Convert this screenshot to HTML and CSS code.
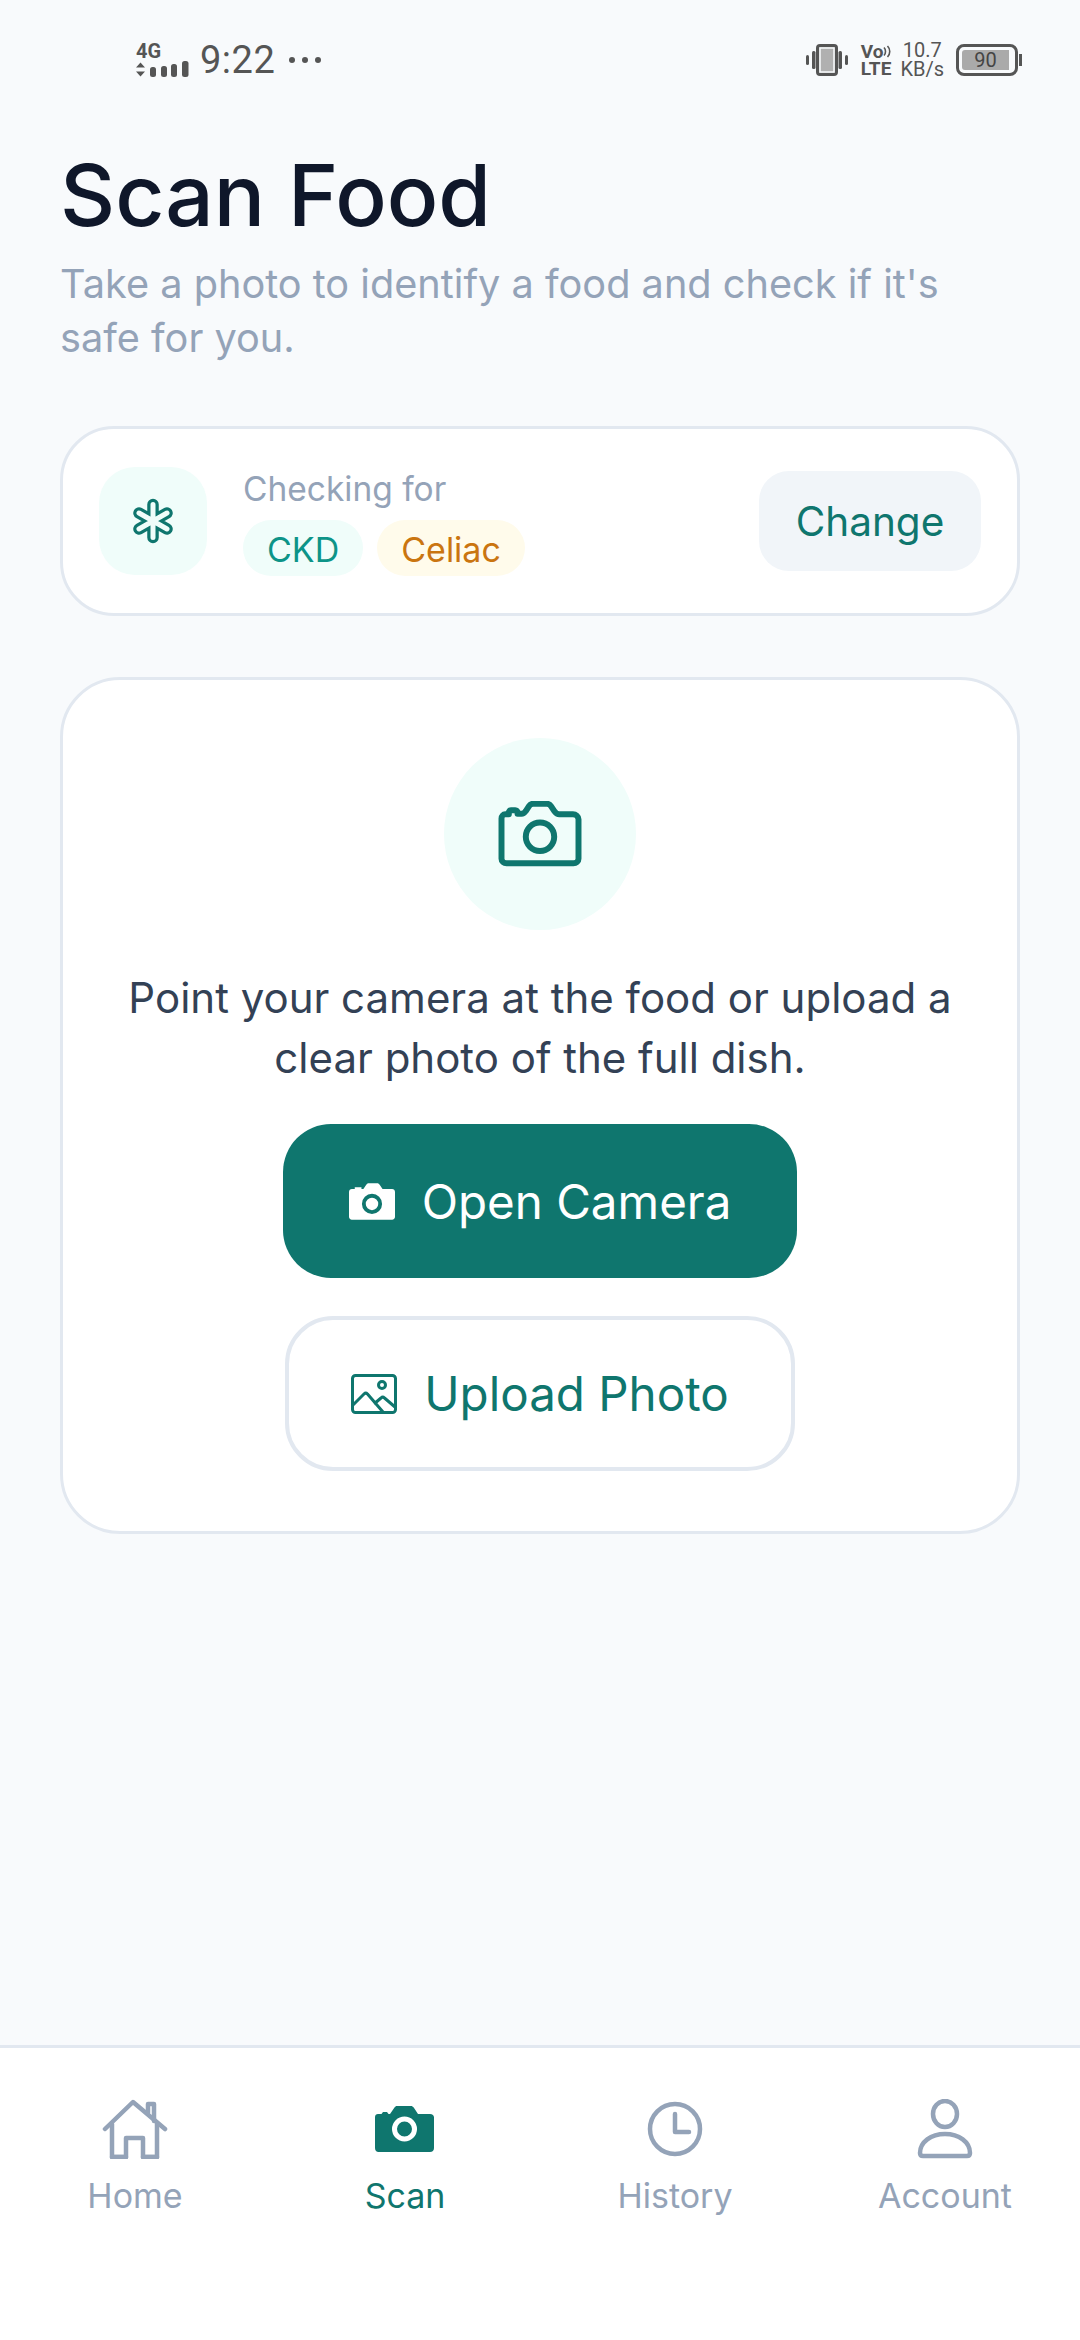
FILE: index.html
```html
<!DOCTYPE html>
<html>
<head>
  <title>Scan Food</title>
  <link rel="stylesheet" href="styles.css">
</head>
<body>
  <div class="screen">
    <div class="status-bar">
      <div class="status-left">
        <div class="net">
          <span class="net-label">4G</span>
          <svg class="net-bars" width="54" height="17" viewBox="0 0 54 17">
            <path d="M0 6.500L4.500 1.500L9 6.500ZM0 10.500L9 10.500L4.500 15.500Z" fill="#555"/>
            <rect x="14" y="6" width="6" height="10" rx="2.500" fill="#555"/>
            <rect x="25" y="5" width="6" height="11" rx="2.500" fill="#555"/>
            <rect x="35" y="3" width="6" height="13" rx="2.500" fill="#555"/>
            <rect x="46" y="0" width="6.500" height="16" rx="2.500" fill="#555"/>
          </svg>
        </div>
        <span class="clock">9:22</span>
        <span class="dots"><i></i><i></i><i></i></span>
      </div>
      <div class="status-right">
        <svg width="42" height="32" viewBox="0 0 42 32">
          <rect x="0" y="11" width="3" height="10" rx="1.500" fill="#555"/>
          <rect x="6" y="7" width="3.500" height="18" rx="1.500" fill="#555"/>
          <rect x="11.500" y="1.500" width="19" height="29" rx="2.500" fill="#aaa" stroke="#555" stroke-width="3"/>
          <rect x="14" y="4" width="14" height="24" fill="#b0b0b0" stroke="#f8fafc" stroke-width="1.500"/>
          <rect x="32.500" y="7" width="3.500" height="18" rx="1.500" fill="#555"/>
          <rect x="39" y="11" width="3" height="10" rx="1.500" fill="#555"/>
        </svg>
        <div class="volte">
          <span class="volte-top">Vo<svg width="9" height="15" viewBox="0 0 9 13"><path d="M1 2.500C3 4.500 3 8.500 1 10.500M4.500 1C7.500 4 7.500 9 4.500 12" fill="none" stroke="#555" stroke-width="1.600"/></svg></span>
          <span class="volte-bottom">LTE</span>
        </div>
        <div class="speed"><span>10.7</span><span>KB/s</span></div>
        <div class="battery">
          <div class="battery-body"><span class="battery-fill">90</span></div>
          <i class="battery-cap"></i>
        </div>
      </div>
    </div>

    <main class="content">
      <h1 class="title">Scan Food</h1>
      <p class="subtitle">Take a photo to identify a food and check if it's safe for you.</p>

      <section class="card condition-card">
        <div class="condition-icon">
          <svg width="48" height="48" viewBox="0 0 48 48">
            <g stroke-linecap="round" fill="none">
              <g stroke="#0f766e" stroke-width="11.500">
                <path d="M24 7.500V40.500M10 16L38 32M38 16L10 32"/>
              </g>
              <g stroke="#f0fdfa" stroke-width="5">
                <path d="M24 7.500V40.500M10 16L38 32M38 16L10 32"/>
              </g>
            </g>
          </svg>
        </div>
        <div class="condition-info">
          <span class="condition-label">Checking for</span>
          <div class="chips">
            <span class="chip chip-teal">CKD</span>
            <span class="chip chip-amber">Celiac</span>
          </div>
        </div>
        <button class="change-btn">Change</button>
      </section>

      <section class="card scan-card">
        <div class="scan-circle">
          <svg width="84" height="66" viewBox="0 0 90 72">
            <path d="M7 14.500H11V12.500C11 11 12 10 13.500 10H18C19.500 10 20.500 11 20.500 12.500V14H25C27 14 28 13 29.500 11L33 5.500C34 4 35.500 3 37.500 3H52.500C54.500 3 56 4 57 5.500L61 11.500C62.500 13.500 64 14.500 66 14.500H81C84 14.500 87 17 87 20V63C87 66 84.500 68 81.500 68H8.500C5.500 68 3 66 3 63V19C3 16.500 5 14.500 7 14.500Z" fill="none" stroke="#0f766e" stroke-width="6.500" stroke-linejoin="round"/>
            <circle cx="45" cy="39" r="15.500" fill="none" stroke="#0f766e" stroke-width="6.500"/>
          </svg>
        </div>
        <p class="scan-text">Point your camera at the food or upload a clear photo of the full dish.</p>
        <button class="btn btn-primary">
          <svg width="46" height="37" viewBox="0 0 48 38">
            <path fill-rule="evenodd" d="M3 6H6V4H13V6H15L18 1.500C18.500 0.700 19.500 0 20.500 0H29.500C30.500 0 31.500 0.700 32 1.500L35 6H45C46.700 6 48 7.300 48 9V35C48 36.700 46.700 38 45 38H3C1.300 38 0 36.700 0 35V9C0 7.300 1.300 6 3 6ZM24 11A10.500 10.500 0 1 0 24 32A10.500 10.500 0 1 0 24 11ZM24 15A6.500 6.500 0 1 1 24 28A6.500 6.500 0 1 1 24 15Z" fill="#fff"/>
          </svg>
          <span>Open Camera</span>
        </button>
        <button class="btn btn-outline">
          <svg width="46" height="40" viewBox="0 0 46 40" fill="none" stroke="#0f766e" stroke-width="3" stroke-linejoin="round">
            <rect x="1.500" y="1.500" width="43" height="37" rx="3"/>
            <circle cx="31" cy="11" r="3.500"/>
            <path d="M2 31L13 20C14 19 15.500 19 16.500 20L32 38M23 30L30 24C31 23 32.500 23 33.500 24L44 33"/>
          </svg>
          <span>Upload Photo</span>
        </button>
      </section>
    </main>

    <nav class="tabbar">
      <a class="tab">
        <svg width="66" height="60" viewBox="0 0 66 60" fill="none" stroke="#94a3b8" stroke-width="4.500" stroke-linecap="round" stroke-linejoin="round">
          <path d="M3 30L31 3L63 30"/>
          <path d="M46 14V5H52V22"/>
          <path d="M10 25V58H24V39H41V58H55V24"/>
          <path d="M10 58H24M41 58H55"/>
        </svg>
        <span>Home</span>
      </a>
      <a class="tab tab-active">
        <svg width="60" height="60" viewBox="0 0 60 60">
          <path fill-rule="evenodd" d="M3 15H6.500L8 13H12L13.500 15H15L19.500 8.500C20 7.700 21 7 22 7H36C37 7 38 7.700 38.700 8.500L43 15H55C57.500 15 59 16.500 59 18.500V49C59 51.500 57.500 53 55 53H3.500C1.500 53 0 51.500 0 49V18C0 16.300 1.300 15 3 15ZM29.500 17.500A12.500 12.500 0 1 0 29.500 42.500A12.500 12.500 0 1 0 29.500 17.500ZM29.500 22.500A7.500 7.500 0 1 1 29.500 37.500A7.500 7.500 0 1 1 29.500 22.500Z" fill="#0f766e"/>
        </svg>
        <span>Scan</span>
      </a>
      <a class="tab">
        <svg width="60" height="60" viewBox="0 0 60 60" fill="none" stroke="#94a3b8" stroke-width="4.500" stroke-linecap="round" stroke-linejoin="round">
          <circle cx="30" cy="30" r="25"/>
          <path d="M30 15V33H44"/>
        </svg>
        <span>History</span>
      </a>
      <a class="tab">
        <svg width="60" height="60" viewBox="0 0 60 60" fill="none" stroke="#94a3b8" stroke-width="4.500" stroke-linejoin="round">
          <ellipse cx="30" cy="15" rx="12" ry="13"/>
          <path d="M5 54C5 43 16 35 30 35C44 35 55 43 55 54C55 56 54 57 52 57H8C6 57 5 56 5 54Z"/>
        </svg>
        <span>Account</span>
      </a>
    </nav>
  </div>
</body>
</html>
```

FILE: styles.css
```css
* {
  box-sizing: border-box;
}

body {
  margin: 0;
  font-family: Inter, sans-serif;
  background-color: #f8fafc;
}

.screen {
  display: flex;
  flex-direction: column;
  width: 1080px;
  height: 2340px;
  overflow: hidden;
}

/* Status bar */
.status-bar {
  display: flex;
  justify-content: space-between;
  align-items: center;
  height: 58px;
  margin-top: 31px;
  padding: 0 58px 0 136px;
  color: #555;
  font-family: Roboto, sans-serif;
}

.status-left,
.status-right {
  display: flex;
  align-items: center;
}

.net {
  display: flex;
  flex-direction: column;
  gap: 1px;
}

.net-label {
  font-size: 20px;
  font-weight: 700;
  line-height: 17px;
}

.clock {
  margin-left: 10px;
  font-size: 38px;
  letter-spacing: 0.5px;
}

.dots {
  display: flex;
  gap: 7px;
  margin-left: 14px;
}

.dots i {
  width: 6px;
  height: 6px;
  border-radius: 50%;
  background-color: #555;
}

.volte {
  display: flex;
  flex-direction: column;
  margin-left: 13px;
  font-weight: 700;
  line-height: 17px;
}

.volte-top {
  display: flex;
  align-items: center;
  font-size: 19px;
}

.volte-bottom {
  font-size: 19px;
}

.speed {
  display: flex;
  flex-direction: column;
  align-items: center;
  margin-left: 8px;
  font-size: 20px;
  line-height: 19px;
}

.battery {
  display: flex;
  align-items: center;
  margin-left: 12px;
}

.battery-body {
  width: 62px;
  height: 32px;
  padding: 3px;
  border: 3px solid #555;
  border-radius: 8px;
}

.battery-fill {
  display: block;
  width: 47px;
  height: 20px;
  border-radius: 3px 0 0 3px;
  background-color: #aaa;
  color: #444;
  font-size: 20px;
  line-height: 20px;
  text-align: center;
}

.battery-cap {
  width: 3px;
  height: 12px;
  margin-left: 1px;
  background-color: #555;
}

/* Main content */
.content {
  flex: 1;
  padding: 0 60px;
}

.title {
  margin: 56px 0 0;
  color: #0f172a;
  font-size: 85.400px;
  font-weight: 500;
  line-height: 100px;
}

.subtitle {
  margin: 12px 0 0;
  color: #94a3b8;
  font-size: 39.700px;
  line-height: 54px;
}

.card {
  border: 3px solid #e2e8f0;
  background-color: #fff;
}

.condition-card {
  display: flex;
  align-items: center;
  height: 190px;
  margin-top: 61px;
  padding: 0 36px;
  border-radius: 54px;
}

.condition-icon {
  display: flex;
  justify-content: center;
  align-items: center;
  width: 108px;
  height: 108px;
  border-radius: 36px;
  background-color: #f0fdfa;
}

.condition-info {
  display: flex;
  flex-direction: column;
  flex: 1;
  margin-left: 36px;
}

.condition-label {
  color: #94a3b8;
  font-size: 33.500px;
  line-height: 44px;
}

.chips {
  display: flex;
  gap: 14px;
  margin-top: 9px;
}

.chip {
  padding: 3px 24px 0;
  border-radius: 28px;
  font-size: 34px;
  line-height: 53px;
}

.chip-teal {
  background-color: #f0fdfa;
  color: #0d9488;
}

.chip-amber {
  background-color: #fffbeb;
  color: #ca7510;
}

.change-btn {
  width: 222px;
  height: 100px;
  border: 0;
  border-radius: 30px;
  background-color: #f1f5f9;
  color: #0f766e;
  font-family: inherit;
  font-size: 40.500px;
  font-weight: 400;
}

.scan-card {
  display: flex;
  flex-direction: column;
  align-items: center;
  height: 857px;
  margin-top: 61px;
  padding: 58px 40px 0;
  border-radius: 60px;
}

.scan-circle {
  display: flex;
  justify-content: center;
  align-items: center;
  width: 192px;
  height: 192px;
  border-radius: 50%;
  background-color: #f0fdfa;
}

.scan-text {
  margin: 38px 0 0;
  color: #334155;
  font-size: 42px;
  line-height: 60px;
  text-align: center;
}

.btn {
  display: flex;
  justify-content: center;
  align-items: center;
  gap: 27px;
  padding: 0;
  font-family: inherit;
  font-size: 47.500px;
  font-weight: 400;
}

.btn-primary {
  width: 514px;
  height: 154px;
  margin-top: 36px;
  border: 0;
  border-radius: 48px;
  background-color: #0f766e;
  color: #fff;
}

.btn-outline {
  width: 510px;
  height: 155px;
  margin-top: 38px;
  border: 4px solid #e2e8f0;
  border-radius: 48px;
  background-color: #fff;
  color: #0f766e;
}

/* Bottom navigation */
.tabbar {
  display: grid;
  grid-template-columns: repeat(4, 1fr);
  height: 295px;
  padding-top: 51px;
  border-top: 3px solid #e2e8f0;
  background-color: #fff;
}

.tab {
  display: flex;
  flex-direction: column;
  align-items: center;
  color: #94a3b8;
  font-size: 34px;
  line-height: 44px;
}

.tab span {
  margin-top: 15px;
}

.tab-active {
  color: #0f766e;
}
```
